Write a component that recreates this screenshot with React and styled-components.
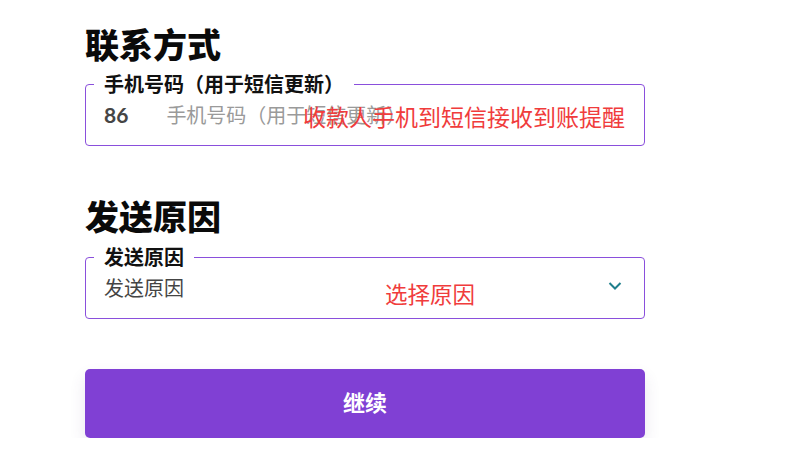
import React from "react";
import styled, { createGlobalStyle } from "styled-components";

const GlobalStyle = createGlobalStyle`
    body {
        margin: 0;
        background: #ffffff;
        font-family: Lato, "Noto Sans CJK SC", sans-serif;
    }
`;

const Page = styled.div`
    width: 560px;
    padding: 20px 0 0 85px;
`;

const Section = styled.section`
    margin-bottom: ${(p) => p.gap || 0}px;
`;

const Heading = styled.h2`
    margin: 0 0 ${(p) => p.space || 2}px 0;
    font-size: 34px;
    line-height: 50px;
    font-weight: 900;
    color: #0a0a0a;
`;

const Field = styled.fieldset`
    position: relative;
    margin: 0;
    height: 74px;
    box-sizing: border-box;
    padding: 0 18px;
    border: 1px solid #8a4fdc;
    border-radius: 4px;
`;

const Legend = styled.legend`
    margin-left: -10px;
    padding: 0 10px;
    font-size: 20px;
    line-height: 24px;
    font-weight: 700;
    color: #111;
`;

const Row = styled.div`
    display: flex;
    align-items: center;
    gap: 38px;
    height: 24px;
    padding-top: 6px;
`;

const Prefix = styled.span`
    font-size: 21px;
    font-weight: 700;
    color: #454545;
    font-family: Lato, sans-serif;
`;

const Placeholder = styled.span`
    font-size: 20px;
    color: ${(p) => (p.dark ? "#444" : "#9a9a9a")};
    flex: 1;
`;

const Chevron = styled.svg`
    width: 14px;
    height: 10px;
    margin-right: 4px;
    margin-top: -2px;
`;

const Note = styled.span`
    position: absolute;
    left: ${(p) => p.left}px;
    top: ${(p) => p.top}px;
    font-size: ${(p) => p.size}px;
    line-height: 1.3;
    color: #f03c3c;
    white-space: nowrap;
`;

const Button = styled.button`
    display: block;
    width: 100%;
    height: 69px;
    padding: 0 0 5px 0;
    border: 0;
    border-radius: 5px;
    background: #8040d4;
    color: #fff;
    font-family: Lato, "Noto Sans CJK SC", sans-serif;
    font-size: 22px;
    font-weight: 700;
    box-shadow: 0 8px 16px rgba(80, 60, 120, 0.12);
`;

export default function App() {
    return (
        <>
            <GlobalStyle />
            <Page>
                <Section gap={46}>
                    <Heading space={2}>联系方式</Heading>
                    <Field>
                        <Legend>手机号码（用于短信更新）</Legend>
                        <Row>
                            <Prefix>86</Prefix>
                            <Placeholder>手机号码（用于短信更新）</Placeholder>
                        </Row>
                        <Note left={217} top={7} size={23}>收款人手机到短信接收到账提醒</Note>
                    </Field>
                </Section>
                <Section gap={50}>
                    <Heading space={3}>发送原因</Heading>
                    <Field>
                        <Legend>发送原因</Legend>
                        <Row>
                            <Placeholder dark>发送原因</Placeholder>
                            <Chevron viewBox="0 0 14 10">
                                <path d="M1.5 2 L7 7.5 L12.5 2" fill="none" stroke="#1f7f8c" strokeWidth="2" />
                            </Chevron>
                        </Row>
                        <Note left={299} top={11} size={22.5}>选择原因</Note>
                    </Field>
                </Section>
                <Button>继续</Button>
            </Page>
        </>
    );
}
